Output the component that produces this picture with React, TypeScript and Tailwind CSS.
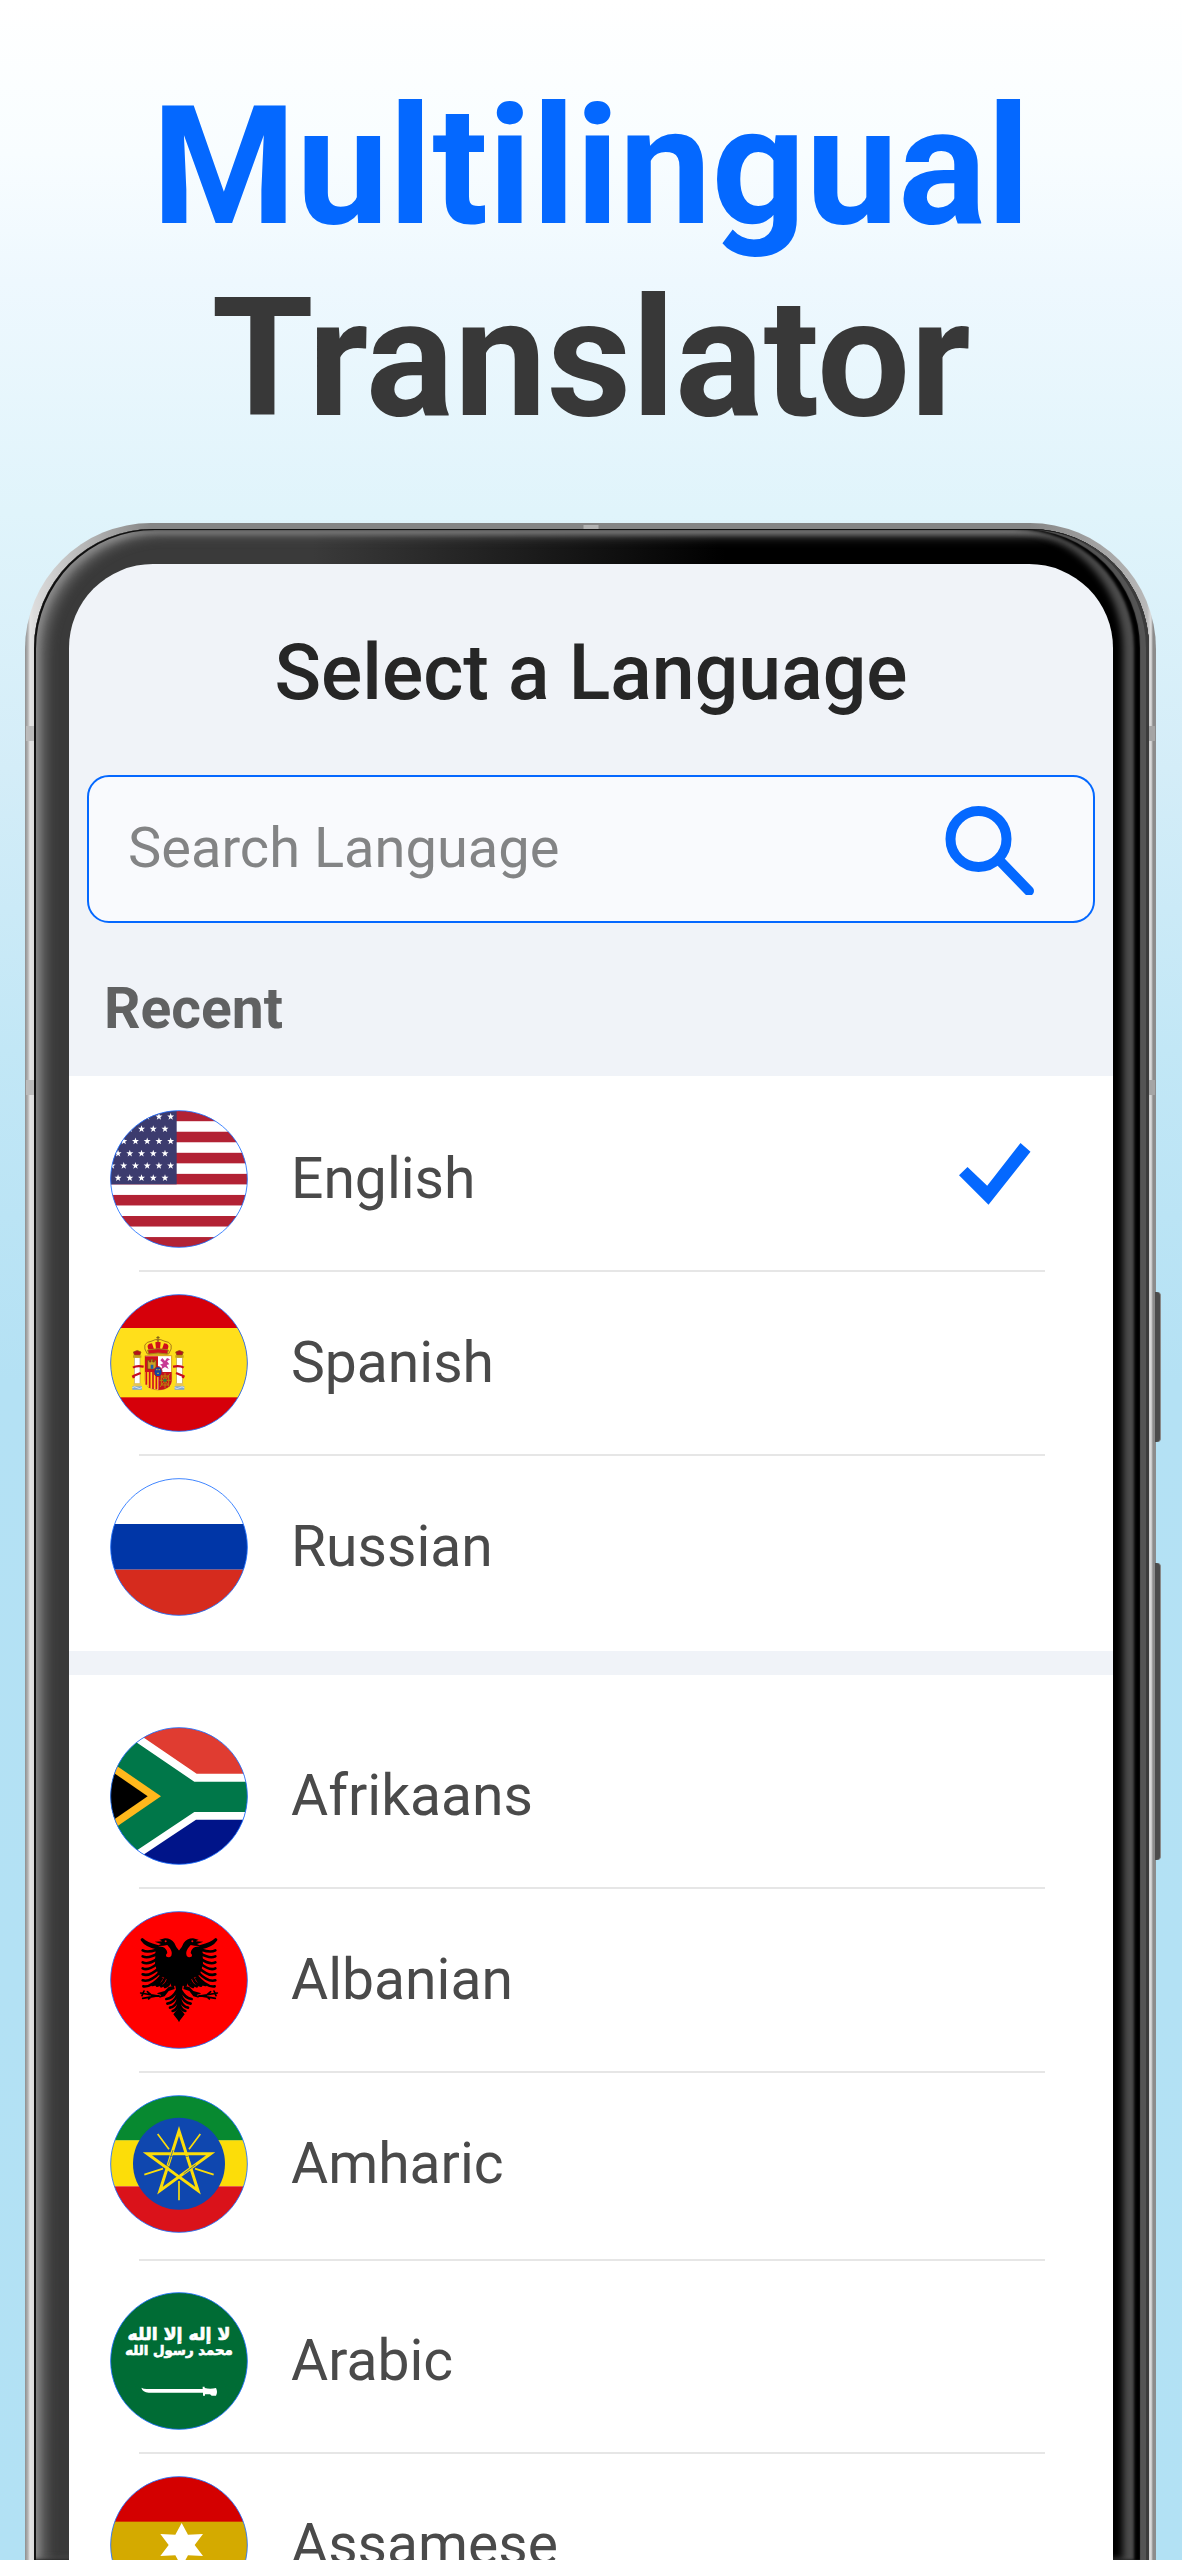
import { ReactNode, useState } from "react";

const STAR = "0,-11 2.6,-3.6 10.5,-3.4 4.2,1.4 6.5,8.9 0,4.4 -6.5,8.9 -4.2,1.4 -10.5,-3.4 -2.6,-3.6";

function UsaFlag() {
  return (
    <>
      <rect width="414" height="414" fill="#fff" />
      {[0, 2, 4, 6, 8, 10, 12].map((i) => (
        <rect key={i} y={2 + i * 31.6} width="414" height="31.6" fill="#b22234" />
      ))}
      <rect width="200" height="223" fill="#3c3b6e" />
      {[0, 1, 2, 3, 4, 5].map((row) =>
        [0, 1, 2, 3, 4, 5].map((col) => (
          <polygon
            key={`${row}-${col}`}
            points={STAR}
            fill="#fff"
            transform={`translate(${(row % 2 ? 165 : 182) - col * 35.2} ${20 + row * 36.8})`}
          />
        ))
      )}
    </>
  );
}

function SpainPillar() {
  return (
    <g>
      <rect x="73" y="190" width="17" height="80" fill="#fff" stroke="#b9a15a" strokeWidth="2" />
      <path d="M69 184h25v7H69z" fill="#c9a21a" />
      <path d="M70 174q12-9 23 0l-3 9H73z" fill="#b5121b" stroke="#8a5a10" strokeWidth="2" />
      <path d="M67 277h29v10H67z" fill="#7fa6d8" />
      <path d="M67 281q7-5 14 0t15 0" fill="none" stroke="#fff" strokeWidth="2" />
      <path d="M70 268h24v8H70z" fill="#e6c455" />
      <path d="M101 218c-12-2-22-4-32 3M70 246l22-9M68 244l4 8" fill="none" stroke="#c60b1e" strokeWidth="7" />
    </g>
  );
}

function SpainFlag() {
  return (
    <>
      <rect width="414" height="414" fill="#d6000a" />
      <rect y="102" width="414" height="208" fill="#ffdf1b" />
      <SpainPillar />
      <g transform="translate(290 0) scale(-1 1)">
        <SpainPillar />
      </g>
      <path d="M105 185h80v72q0 30-40 31-40-1-40-31z" fill="#fff" stroke="#d8a019" strokeWidth="3" />
      <path d="M105 187h39v47h-39z" fill="#d0101c" />
      <path d="M105 234h39v52q-39-2-39-29z" fill="#ffd21b" />
      <path d="M109 234v38M119 234v48M129 234v51M139 234v52" stroke="#d0101c" strokeWidth="5" />
      <path d="M145 234h40v23q0 29-40 31z" fill="#c8101c" />
      <path d="M150 239l29 40M180 239l-30 40M165 237v46M149 259h33M154 246h22v27h-22z" fill="none" stroke="#b8860b" strokeWidth="3" />
      <circle cx="165" cy="259" r="5" fill="#2f7d3a" />
      <path d="M113 225v-26h5v5h5v-8h5v8h5v-5h5v26z" fill="#cfa022" stroke="#6b5310" strokeWidth="2" />
      <path d="M122 212h8v12h-8z" fill="#1d5fa8" />
      <path d="M157 192l8 9 6-9 9 4-9 6 7 9-8 2 6 12-11-6-11 7 2-10-6-4 10-4-9-9z" fill="#c83a94" />
      <ellipse cx="144" cy="233" rx="12" ry="15" fill="#1646a0" stroke="#c60b1e" strokeWidth="3" />
      <path d="M139 227h3M146 227h3M142 238h4" stroke="#e8c52a" strokeWidth="4" />
      <path d="M112 180q-22-34 14-39 9-5 18-5t18 5q36 5 14 39z" fill="#ffdf1b" stroke="#a8781a" strokeWidth="3" />
      <path d="M115 166q-8-17 11-18l6 18zM138 166l-2-21q8-4 16 0l-2 21zM173 166q8-17-11-18l-6 18z" fill="#d0101c" />
      <path d="M113 168q31-8 62 0l-3 12q-28-6-56 0z" fill="#d0101c" stroke="#a8781a" strokeWidth="3" />
      <path d="M144 126v12M139 131h10" stroke="#7a5a18" strokeWidth="3" />
      <circle cx="144" cy="140" r="4" fill="#a8781a" />
    </>
  );
}

function RussiaFlag() {
  return (
    <>
      <rect width="414" height="138" fill="#fff" />
      <rect y="138" width="414" height="137" fill="#0036a7" />
      <rect y="275" width="414" height="139" fill="#d62b1e" />
    </>
  );
}

function SouthAfricaFlag() {
  return (
    <>
      <rect width="414" height="208" fill="#e03c31" />
      <rect y="208" width="414" height="206" fill="#001489" />
      <path d="M0-37L260 140H414V278H258L0 450z" fill="#fff" />
      <path d="M0-8L253 164H414V255H253L0 424z" fill="#007749" />
      <path d="M0 103L153 208L0 313z" fill="#ffb81c" />
      <path d="M0 130L113 208L0 286z" fill="#000" />
    </>
  );
}

// one side of the double-headed eagle, mirrored for the other
function EagleHalf() {
  return (
    <g>
      <path d="M208 120Q198 110 193 96Q184 82 165 82L148 86L157 91L134 92L153 99L141 105Q158 106 172 102L180 112Q188 124 184 134Q178 142 168 136Q167 130 172 126Q170 112 158 108L137 104L135 160L145 192Q165 200 180 212L184 226L196 224L200 250L208 262z" />
      <circle cx="167" cy="91" r="3" fill="#f00" />
      <path
        d="M96 86Q108 105 145 112M97 85Q108 96 142 106M98 118Q112 126 140 116M98 136Q114 144 142 128M98 154Q114 163 142 143M98 172Q114 181 144 157M98 190Q117 198 148 170M98 208Q120 215 152 182M100 226Q124 230 156 192M128 222Q145 220 155 202M141 224Q158 220 164 204M154 226Q168 222 173 208M165 228Q177 224 180 212"
        fill="none"
        stroke="#000"
        strokeWidth="8"
        strokeLinecap="round"
      />
      <path d="M192 224L176 228L164 240L140 247L154 252L148 260L164 256L176 240L194 234z" />
      <path d="M150 256L92 246M146 254L98 262M122 250L112 242M128 253L116 264M102 240L96 254" fill="none" stroke="#000" strokeWidth="5" strokeLinecap="round" />
      <path
        d="M200 240Q188 262 169 264M202 252Q192 275 172 278M204 265Q196 288 180 290M206 278Q200 298 188 300"
        fill="none"
        stroke="#000"
        strokeWidth="8"
        strokeLinecap="round"
      />
      <path d="M208 240H199L202 295L190 310L208 333z" />
    </g>
  );
}

function AlbaniaFlag() {
  return (
    <>
      <rect width="414" height="414" fill="#f00" />
      <EagleHalf />
      <g transform="translate(414 0) scale(-1 1)">
        <EagleHalf />
      </g>
    </>
  );
}

function EthiopiaFlag() {
  return (
    <>
      <rect width="414" height="137" fill="#078930" />
      <rect y="136" width="414" height="138" fill="#fcdd09" />
      <rect y="274" width="414" height="140" fill="#da121a" />
      <circle cx="207" cy="206" r="138" fill="#0f47af" />
      <g fill="none" stroke="#fcdd09">
        <path
          d="M207 108L264 287L112 176H302L150 287z"
          strokeWidth="9"
          strokeMiterlimit="10"
        />
        <path d="M177 163L143 117M237 163L271 117M159 221L103 239M255 221L311 239M207 258V316" strokeWidth="5" />
      </g>
      <path d="M180 184h54M189 165l-14 44M168 209l40 31M221 236l36-27" fill="none" stroke="#0f47af" strokeWidth="2" />
    </>
  );
}

function SaudiFlag() {
  return (
    <>
      <rect width="414" height="414" fill="#006c35" />
      <g
        fill="#fff"
        stroke="#fff"
        strokeWidth="2"
        fontFamily="'DejaVu Sans', sans-serif"
        fontWeight="bold"
        textAnchor="middle"
      >
        <text x="207" y="143" fontSize="52">لا إله إلا الله</text>
        <text x="207" y="190" fontSize="40">محمد رسول الله</text>
      </g>
      <path d="M94 287Q102 292 114 291H278V284H284V288Q300 292 318 288Q324 300 318 311H305L300 307H285V311H279V302H116Q98 301 94 287z" fill="#fff" />
    </>
  );
}

function AssamFlag() {
  return (
    <>
      <rect width="414" height="138" fill="#d40000" />
      <rect y="137" width="414" height="138" fill="#d4aa00" />
      <rect y="275" width="414" height="139" fill="#008000" />
      <path d="M215 141L234 176L279 174L254 207L279 240L234 238L215 273L196 238L151 240L176 207L151 174L196 176z" fill="#fff" />
    </>
  );
}

function RoundFlag({ id, children }: { id: string; children: ReactNode }) {
  return (
    <svg viewBox="0 0 414 414" className="size-[138px] shrink-0" aria-hidden="true">
      <clipPath id={`clip-${id}`}>
        <circle cx="207" cy="207" r="205" />
      </clipPath>
      <g clipPath={`url(#clip-${id})`}>{children}</g>
      <circle cx="207" cy="207" r="205" fill="none" stroke="#1a6dff" strokeWidth="2.5" />
    </svg>
  );
}

type Language = { name: string; flag: ReactNode; spacing?: string };

const recent: Language[] = [
  { name: "English", flag: <UsaFlag /> },
  { name: "Spanish", flag: <SpainFlag /> },
  { name: "Russian", flag: <RussiaFlag /> },
];

const languages: Language[] = [
  { name: "Afrikaans", flag: <SouthAfricaFlag /> },
  { name: "Albanian", flag: <AlbaniaFlag /> },
  { name: "Amharic", flag: <EthiopiaFlag />, spacing: "pb-[26px]" },
  { name: "Arabic", flag: <SaudiFlag />, spacing: "pt-[31px]" },
  { name: "Assamese", flag: <AssamFlag /> },
];

function LanguageRow({
  language,
  selected,
  onSelect,
}: {
  language: Language;
  selected: boolean;
  onSelect: () => void;
}) {
  return (
    <li className="group">
      <button
        type="button"
        aria-pressed={selected}
        onClick={onSelect}
        className={`flex w-full items-center pt-[22px] pb-[22px] pl-[41px] pr-[82px] text-left ${language.spacing ?? ""}`}
      >
        <RoundFlag id={language.name}>{language.flag}</RoundFlag>
        <span className="ml-[43px] flex-1 text-[57px] leading-[64px] text-[#4a4a4a]">{language.name}</span>
        {selected && (
          <svg viewBox="0 0 72 72" className="size-[72px]" aria-hidden="true">
            <path d="M8.5 24L28.2 42.7L61.5 0L71.5 8.7L29.5 61.7L0 32.3z" fill="#0468ff" />
          </svg>
        )}
      </button>
      <div className="mr-[68px] ml-[70px] h-[2px] bg-[#e6e6e6] group-last:hidden" />
    </li>
  );
}

export default function App() {
  const [selected, setSelected] = useState("English");
  const [query, setQuery] = useState("");

  const renderRows = (items: Language[]) =>
    items
      .filter((l) => l.name.toLowerCase().includes(query.toLowerCase()))
      .map((l) => (
        <LanguageRow
          key={l.name}
          language={l}
          selected={l.name === selected}
          onSelect={() => setSelected(l.name)}
        />
      ));

  return (
    <main className="flex h-screen flex-col overflow-hidden bg-[linear-gradient(to_bottom,#ffffff_0%,#f8fdff_6%,#eef8fe_11%,#e0f4fb_20%,#d4edf8_30%,#c2e7f6_41%,#b4e1f4_54%,#b2e1f4_100%)] pt-[71px] font-[Roboto,sans-serif]">
      <h1 className="mb-[68px] text-center text-[165px] leading-[192px] font-bold text-[#383838]">
        <span className="block text-[#0468ff]">Multilingual</span>
        Translator
      </h1>

      {/* phone */}
      <div className="relative mr-[26px] ml-[25px] flex min-h-0 flex-1 flex-col rounded-t-[126px] bg-[linear-gradient(to_right,#8e8e8e_0,#b5b5b5_3px,#e4e4e4_5px,#dcdcdc_9px,#858585_126px,#858585_calc(100%-126px),#b8b8b8_calc(100%-9px),#dedede_calc(100%-5px),#8c8c8c_calc(100%-3px),#8c8c8c_100%)] pt-[6px] pr-[7px] pl-[9px]">
        <div className="absolute top-[2px] left-1/2 h-[4px] w-[15px] -translate-x-1/2 bg-[#b3b3b3]" />
        <div className="absolute top-[203px] left-[1px] h-[15px] w-[8px] bg-[#bbbbbb]" />
        <div className="absolute top-[203px] right-[1px] h-[15px] w-[6px] bg-[#a5a5a5]" />
        <div className="absolute top-[557px] left-[1px] h-[15px] w-[8px] bg-[#bbbbbb]" />
        <div className="absolute top-[557px] right-[1px] h-[15px] w-[6px] bg-[#a5a5a5]" />
        <div className="absolute top-[769px] -right-[5px] h-[150px] w-[6px] rounded-r-sm border-r border-[#8a8a8a] bg-[#4c4c4c]" />
        <div className="absolute top-[1040px] -right-[5px] h-[297px] w-[6px] rounded-r-sm border-r border-[#8a8a8a] bg-[#4c4c4c]" />

        <div className="flex min-h-0 flex-1 flex-col rounded-t-[119px] bg-[linear-gradient(to_right,#3a3a3a_0,#3a3a3a_25%,#000000_62%,#000000_100%)] pt-[35px] pr-[36px] pl-[35px] shadow-[inset_2px_1px_0_#111111,inset_-3px_0_0_#3c3c3c,inset_-9px_0_1px_#545454,inset_-15px_0_3px_#000000,inset_-26px_0_7px_#4d4d4d,inset_5px_4px_6px_#8a8a8a,inset_12px_6px_12px_#6a6a6a]">
          <div className="min-h-0 flex-1 overflow-y-auto rounded-t-[84px] bg-[#f0f3f8] [scrollbar-width:none]">
            <h2 className="pt-[69px] pb-[62px] text-center text-[77px] leading-[80px] font-medium text-[#262626]">
              Select a Language
            </h2>

            <label className="mx-[18px] flex h-[148px] items-center rounded-[22px] border-2 border-[#0468ff] bg-[#f9fafd] pr-[57px] pl-[39px]">
              <input
                type="text"
                aria-label="Search Language"
                placeholder="Search Language"
                value={query}
                onChange={(e) => setQuery(e.target.value)}
                className="min-w-0 flex-1 bg-transparent pb-[3px] text-[56px] leading-[64px] text-[#4a4a4a] outline-none placeholder:text-[#838485]"
              />
              <svg viewBox="0 0 91 91" className="size-[91px]" fill="none" stroke="#0468ff" strokeWidth="10" aria-hidden="true">
                <circle cx="33.5" cy="35" r="28" />
                <path d="M55 57L84 87" strokeLinecap="round" />
              </svg>
            </label>

            <h3 className="pt-[54px] pb-[35px] pl-[35px] text-[57px] leading-[64px] font-bold text-[#606162]">Recent</h3>

            <ul className="bg-white pt-[12px] pb-[13px]">{renderRows(recent)}</ul>
            <ul className="mt-[24px] bg-white pt-[30px] pb-[14px]">{renderRows(languages)}</ul>
          </div>
        </div>
      </div>
    </main>
  );
}
